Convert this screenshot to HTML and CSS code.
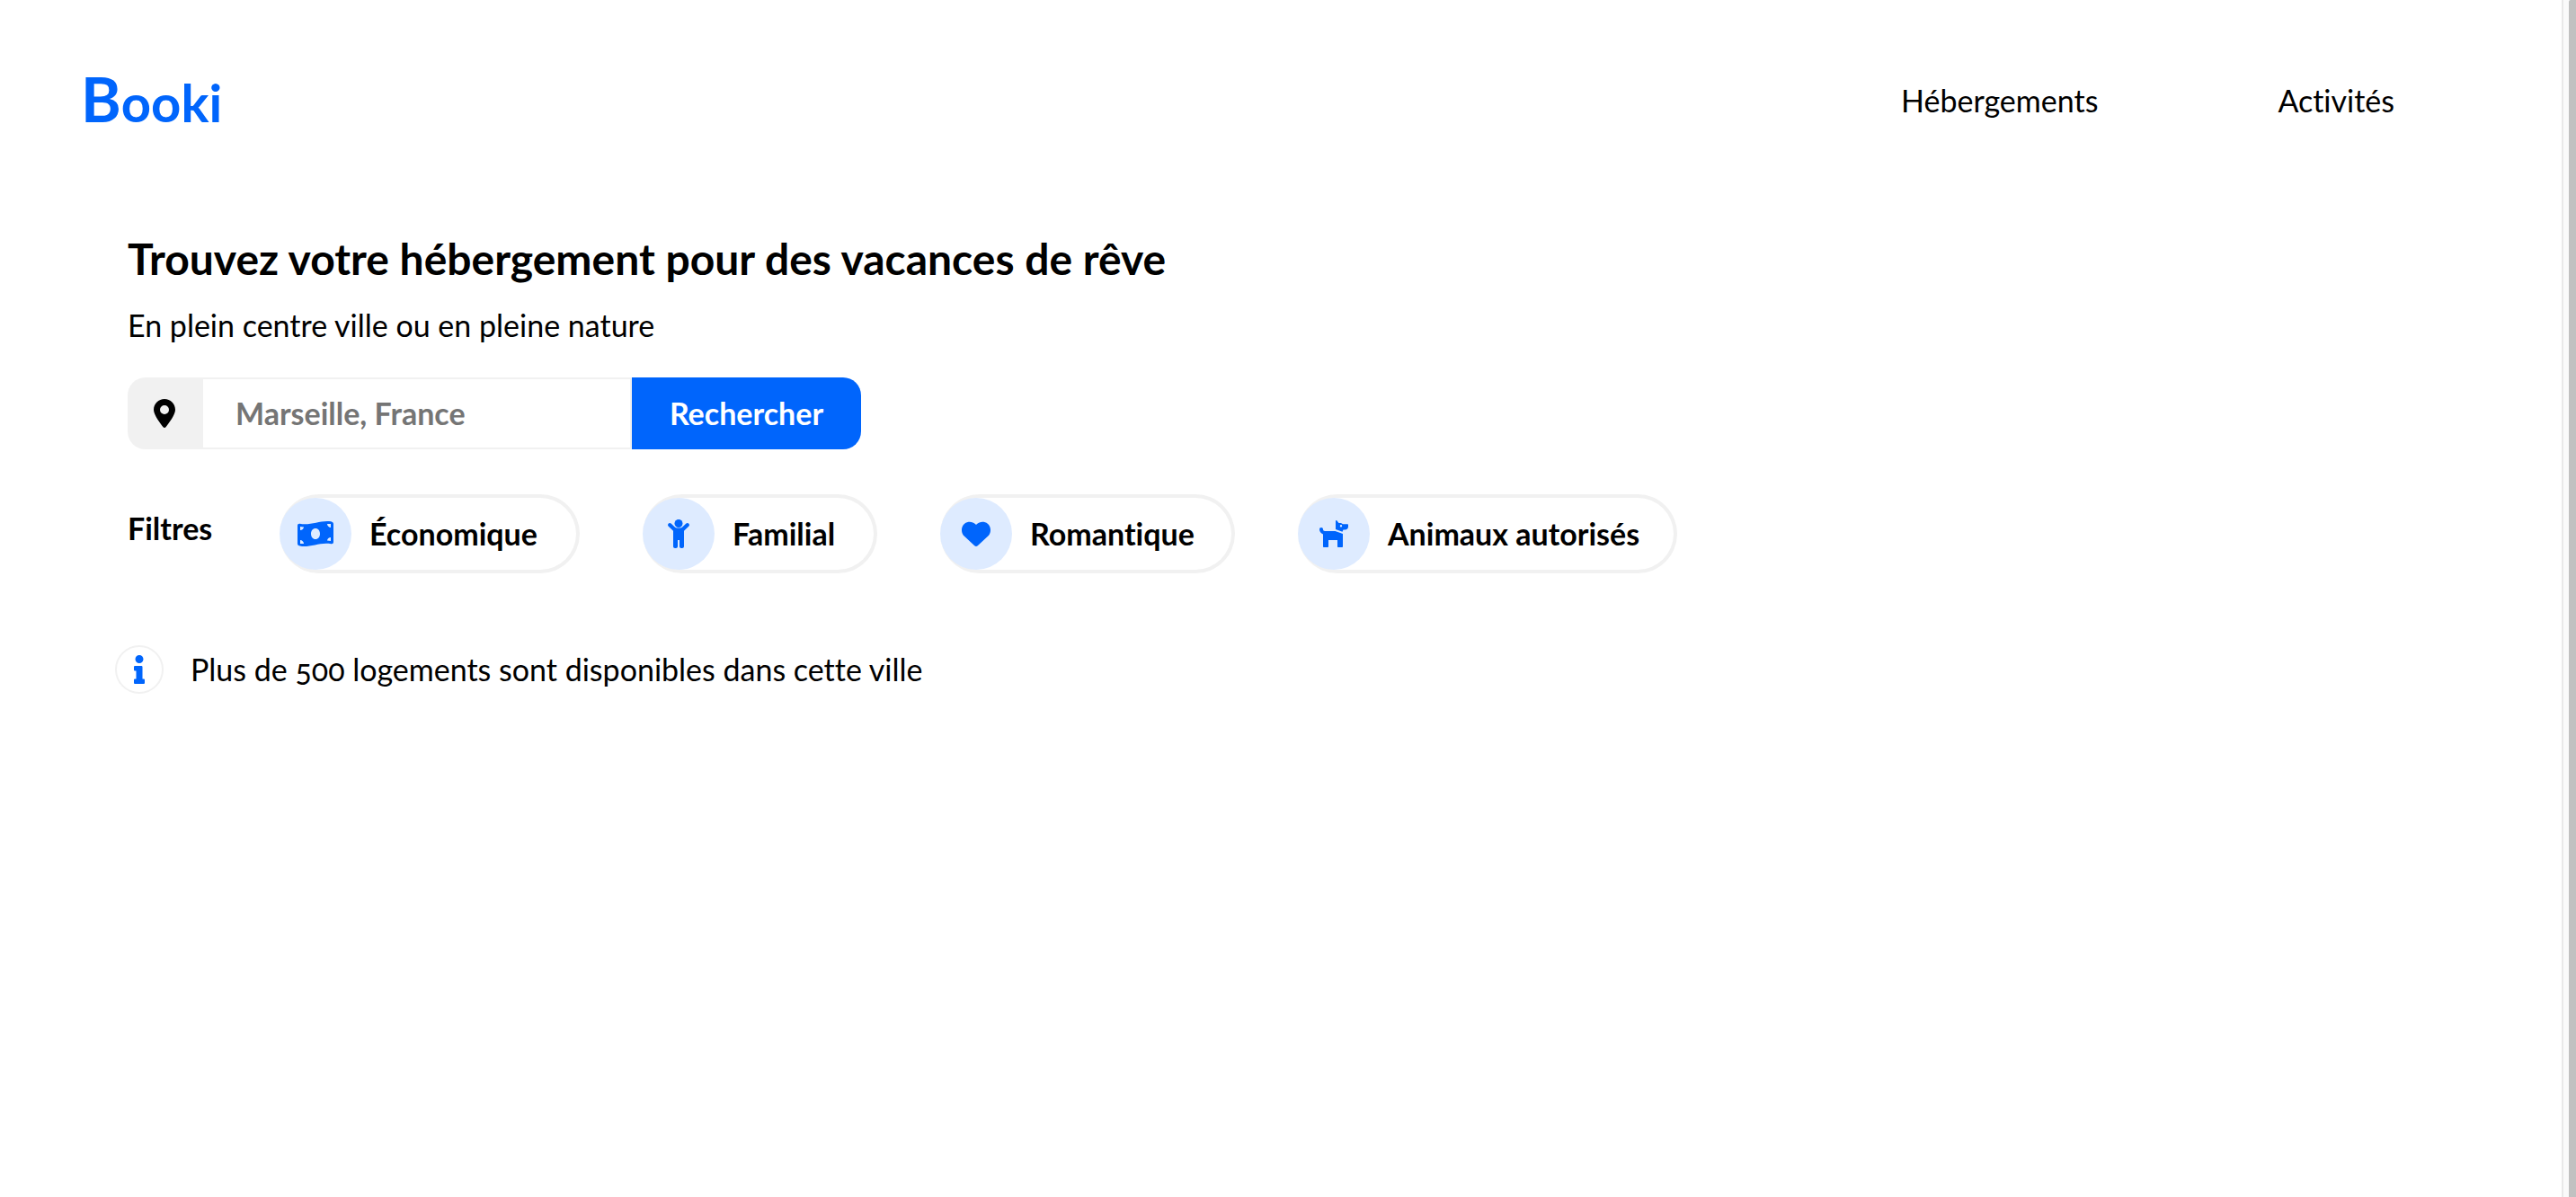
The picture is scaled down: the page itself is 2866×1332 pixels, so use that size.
FILE: index.html
```html
<!DOCTYPE html>
<html lang="fr">
<head>
<meta charset="utf-8">
<meta name="viewport" content="width=device-width, initial-scale=1">
<title>Booki</title>
<link rel="stylesheet" href="styles.css">
</head>
<body>
<div class="page">
  <header class="header">
    <a class="logo" href="#">Booki</a>
    <nav class="nav">
      <a href="#hebergements">Hébergements</a>
      <a href="#activites">Activités</a>
    </nav>
  </header>
  <main class="main">
    <h1 class="title">Trouvez votre hébergement pour des vacances de rêve</h1>
    <p class="subtitle">En plein centre ville ou en pleine nature</p>
    <form class="search">
      <label class="search-pin" for="city" aria-label="Ville">
        <svg width="24" height="32" viewBox="0 0 384 512"><path d="M215.700 499.200C267 435 384 279.400 384 192C384 86 298 0 192 0S0 86 0 192c0 87.400 117 243 168.300 307.200c12.300 15.300 35.100 15.300 47.400 0zM192 112a80 80 0 1 1 0 160 80 80 0 1 1 0-160z"/></svg>
      </label>
      <input class="search-input" id="city" type="text" placeholder="Marseille, France">
      <button class="search-button" type="button">Rechercher</button>
    </form>
    <section class="filters">
      <h2 class="filters-title">Filtres</h2>
      <div class="filter-list">
        <button class="filter" type="button">
          <span class="filter-icon"><svg width="40" height="28" viewBox="0 0 40 28"><path fill-rule="evenodd" d="M0 5C0 3.500 1 2.600 2.500 2.800C14 5 24-.6 35 .1C38.500.3 40 1.300 40 3V23C40 24.600 39 25.400 37.500 25.200C26 23 16 28.600 5 27.900C1.500 27.700 0 26.700 0 25ZM20 8C17 8 15 10.600 15 14S17 20 20 20S25 17.400 25 14S23 8 20 8ZM3 6V10C5 10 7 8.400 7 6.500ZM3 21V25H7C7 23 5 21 3 21ZM37 3H33C33 5 35 7 37 7ZM37 18C35 18 33 19.600 33 21.500L37 22Z"/></svg></span>
          <span>Économique</span>
        </button>
        <button class="filter" type="button">
          <span class="filter-icon"><svg width="24" height="32" viewBox="0 0 24 32"><circle cx="12" cy="4.500" r="4.500"/><path d="M.6 4.800C1.400 3.800 2.700 3.700 3.600 4.600L7.800 8.500C8.500 9.200 9.300 9.500 10.200 9.500H13.800C14.700 9.500 15.500 9.200 16.200 8.500L20.400 4.600C21.300 3.700 22.600 3.800 23.400 4.800C24.200 5.700 24.100 7 23.200 7.800L18 12.700V30C18 31.200 17.200 32 16 32H15C13.800 32 13 31.200 13 30V23H11V30C11 31.200 10.200 32 9 32H8C6.800 32 6 31.200 6 30V12.700L.8 7.800C-.1 7-.2 5.700.6 4.800Z"/></svg></span>
          <span>Familial</span>
        </button>
        <button class="filter" type="button">
          <span class="filter-icon"><svg width="32" height="32" viewBox="0 0 512 512"><path d="M47.600 300.400L228.300 469.100c7.500 7 17.400 10.900 27.700 10.900s20.200-3.900 27.700-10.900L464.400 300.400c30.400-28.300 47.600-68 47.600-109.500v-5.800c0-69.900-50.500-129.500-119.400-141C347 36.500 300.600 51.400 268 84L256 96 244 84c-32.600-32.600-79-47.500-124.600-39.900C50.500 55.600 0 115.200 0 185.100v5.800c0 41.500 17.200 81.200 47.600 109.500z"/></svg></span>
          <span>Romantique</span>
        </button>
        <button class="filter" type="button">
          <span class="filter-icon"><svg width="32" height="32" viewBox="0 0 32 32"><path fill-rule="evenodd" d="M18 2C18 .9 19 .8 19.500 1.500L21.500 4H24L26 5.200H31C31.700 5.200 32 5.600 32 6.200V8C32 10.200 30.500 11.500 28.500 11.500H26.500L25.500 13.800L18 11ZM24 6A1.200 1.200 0 1 0 24 8.400A1.200 1.200 0 1 0 24 6ZM0 11C0 9.800 .8 9 2 9S4 9.800 4 11C4 12.200 4.800 13 6 13H17.500L26 16V30C26 30.600 25.600 31 25 31H21C20.400 31 20 30.600 20 30V23H10V30C10 30.600 9.600 31 9 31H5C4.400 31 4 30.600 4 30V16.500C1.500 15.500 0 13.500 0 11Z"/></svg></span>
          <span>Animaux autorisés</span>
        </button>
      </div>
    </section>
    <p class="info">
      <span class="info-icon"><svg width="12" height="32" viewBox="0 0 192 512"><path d="M20 424.229h20V279.771H20c-11.046 0-20-8.954-20-20V212c0-11.046 8.954-20 20-20h112c11.046 0 20 8.954 20 20v212.229h20c11.046 0 20 8.954 20 20V492c0 11.046-8.954 20-20 20H20c-11.046 0-20-8.954-20-20v-47.771c0-11.046 8.954-20 20-20zM96 0C56.235 0 24 32.235 24 72s32.235 72 72 72 72-32.235 72-72S135.764 0 96 0z"/></svg></span>
      <span>Plus de 500 logements sont disponibles dans cette ville</span>
    </p>
  </main>
</div>
<div class="scroll-track" aria-hidden="true"><div class="scroll-thumb"></div></div>
</body>
</html>
```
FILE: styles.css
```css
* {
  box-sizing: border-box;
}

body {
  margin: 0;
  display: flex;
  min-height: 100vh;
  background: #fff;
  color: #000;
  font-family: Lato, "Open Sans", sans-serif;
  font-size: 34px;
  font-variant-ligatures: none;
  font-variant-numeric: oldstyle-nums;
  line-height: 40px;
}

.page {
  flex: 1;
}

.header {
  display: flex;
  justify-content: space-between;
  align-items: center;
  height: 224px;
  padding: 0 186px 0 90px;
}

.logo {
  color: #0065fc;
  font-size: 58px;
  font-weight: 700;
  line-height: 80px;
  text-decoration: none;
}

.logo::first-letter {
  font-size: 68px;
}

.nav {
  display: flex;
  gap: 200px;
}

.nav a {
  color: inherit;
  text-decoration: none;
}

.main {
  padding: 36px 142px;
}

.title {
  margin: 0;
  font-size: 48px;
  font-weight: 700;
  line-height: 56px;
}

.subtitle {
  margin: 26px 0 38px;
}

.search {
  display: flex;
  width: 816px;
  height: 80px;
}

.search-pin {
  display: flex;
  align-items: center;
  justify-content: center;
  width: 82px;
  border-radius: 20px 0 0 20px;
  background: #f1f1f1;
}

.search-input {
  flex: 1;
  min-width: 0;
  padding: 0 36px;
  border: 2px solid #f1f1f1;
  background: #fff;
  font: inherit;
  font-weight: 700;
}

.search-input::placeholder {
  color: #757575;
  opacity: 1;
}

.search-button {
  width: 255px;
  border: 0;
  border-radius: 0 20px 20px 0;
  background: #0065fc;
  color: #fff;
  font: inherit;
  font-weight: 700;
}

.filters {
  display: flex;
  margin-top: 50px;
}

.filters-title {
  width: 169px;
  margin: 18px 0 0;
  font-size: inherit;
  font-weight: 700;
}

.filter-list {
  display: grid;
  grid-template-columns: 334px 261px 328px 422px;
  gap: 70px;
}

.filter {
  display: flex;
  align-items: center;
  gap: 20px;
  height: 88px;
  padding: 0;
  border: 4px solid #f1f1f1;
  border-left: 0;
  border-radius: 44px;
  background: #fff;
  color: #000;
  font: inherit;
  font-weight: 700;
  white-space: nowrap;
}

.filter-icon {
  display: flex;
  align-items: center;
  justify-content: center;
  width: 80px;
  height: 80px;
  border-radius: 50%;
  background: #deebff;
  fill: #0065fc;
}

.info {
  display: flex;
  align-items: center;
  gap: 30px;
  margin: 80px 0 0 -14px;
}

.info-icon {
  display: flex;
  align-items: center;
  justify-content: center;
  width: 54px;
  height: 54px;
  border: 2px solid #f1f1f1;
  border-radius: 50%;
  fill: #0065fc;
}

.scroll-track {
  display: flex;
  width: 16px;
  padding-left: 6px;
  border-left: 2px solid #e8e8e8;
  background: #fafafa;
}

.scroll-thumb {
  flex: 1;
  border-radius: 2px 0 0 0;
  background: #c1c1c1;
}
```
